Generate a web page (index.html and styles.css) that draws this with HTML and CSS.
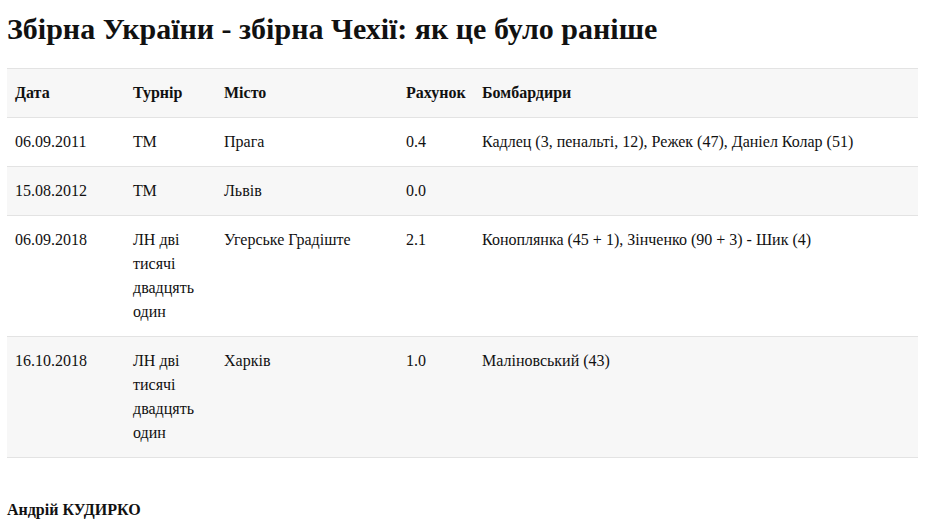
FILE: index.html
```html
<!DOCTYPE html>
<html lang="uk">
<head>
<meta charset="utf-8">
<link rel="stylesheet" href="styles.css">
</head>
<body>
<div class="page">
  <h1 class="title">Збірна України - збірна Чехії: як це було раніше</h1>
  <table class="results">
    <colgroup>
      <col class="c-date"><col class="c-tour"><col class="c-city"><col class="c-score"><col class="c-scorers">
    </colgroup>
    <thead>
      <tr><th>Дата</th><th>Турнір</th><th>Місто</th><th>Рахунок</th><th>Бомбардири</th></tr>
    </thead>
    <tbody>
      <tr><td>06.09.2011</td><td>ТМ</td><td>Прага</td><td>0.4</td><td>Кадлец (3, пенальті, 12), Режек (47), Даніел Колар (51)</td></tr>
      <tr class="alt"><td>15.08.2012</td><td>ТМ</td><td>Львів</td><td>0.0</td><td></td></tr>
      <tr><td>06.09.2018</td><td>ЛН дві тисячі двадцять один</td><td>Угерське Градіште</td><td>2.1</td><td>Коноплянка (45 + 1), Зінченко (90 + 3) - Шик (4)</td></tr>
      <tr class="alt"><td>16.10.2018</td><td>ЛН дві тисячі двадцять один</td><td>Харків</td><td>1.0</td><td>Маліновський (43)</td></tr>
    </tbody>
  </table>
  <p class="author">Андрій КУДИРКО</p>
</div>
</body>
</html>
```
FILE: styles.css
```css
html, body {
  margin: 0;
  padding: 0;
  background: #fff;
}
.page {
  padding: 0 15px 0 7px;
  font-family: "Liberation Serif", "Times New Roman", serif;
  color: #111;
}
.title {
  font-size: 30px;
  font-weight: bold;
  line-height: 36px;
  margin: 0;
  padding-top: 11px;
  padding-bottom: 21px;
}
.results {
  width: 911px;
  border-collapse: collapse;
  table-layout: fixed;
  font-size: 16px;
  line-height: 24px;
}
.c-date { width: 118px; }
.c-tour { width: 91px; }
.c-city { width: 182px; }
.c-score { width: 76px; }
.c-scorers { width: auto; }
.results th,
.results td {
  text-align: left;
  vertical-align: top;
  padding: 12px 8px;
  border-bottom: 1px solid #e3e3e3;
}
.results th {
  font-weight: bold;
  background: #f7f7f7;
  border-top: 1px solid #e3e3e3;
}
.results tr.alt td {
  background: #f7f7f7;
}
.author {
  font-size: 16px;
  font-weight: bold;
  margin: 0;
  padding-top: 40px;
  line-height: 24px;
}
```
